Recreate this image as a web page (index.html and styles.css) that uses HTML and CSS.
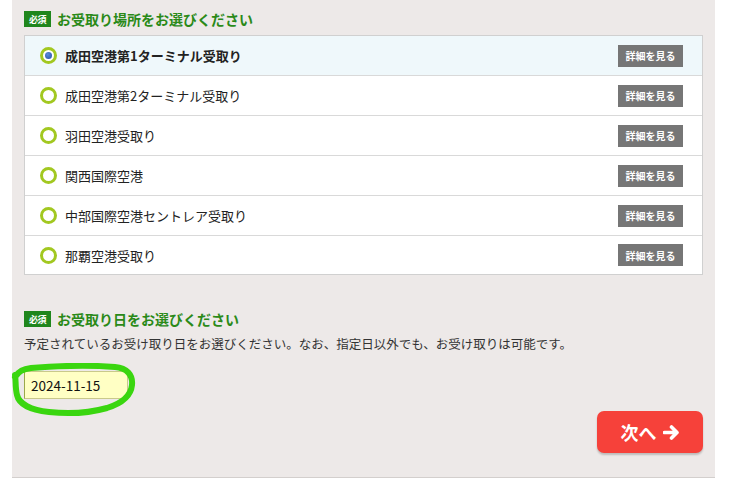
FILE: index.html
```html
<!DOCTYPE html>
<html lang="ja">
<head>
<meta charset="utf-8">
<link rel="stylesheet" href="styles.css">
</head>
<body>
<div class="panel">
  <h2 class="heading"><span class="badge">必須</span>お受取り場所をお選びください</h2>
  <ul class="places">
    <li class="place selected"><span class="radio checked"></span><span class="name">成田空港第1ターミナル受取り</span><span class="detail">詳細を見る</span></li>
    <li class="place"><span class="radio"></span><span class="name">成田空港第2ターミナル受取り</span><span class="detail">詳細を見る</span></li>
    <li class="place"><span class="radio"></span><span class="name">羽田空港受取り</span><span class="detail">詳細を見る</span></li>
    <li class="place"><span class="radio"></span><span class="name">関西国際空港</span><span class="detail">詳細を見る</span></li>
    <li class="place"><span class="radio"></span><span class="name">中部国際空港セントレア受取り</span><span class="detail">詳細を見る</span></li>
    <li class="place"><span class="radio"></span><span class="name">那覇空港受取り</span><span class="detail">詳細を見る</span></li>
  </ul>
  <h2 class="heading second"><span class="badge">必須</span>お受取り日をお選びください</h2>
  <p class="desc">予定されているお受け取り日をお選びください。なお、指定日以外でも、お受け取りは可能です。</p>
  <div class="date-wrap">
    <div class="date">2024-11-15</div>
    <svg class="scribble" width="130" height="60" viewBox="0 0 130 60">
      <path d="M4 14 C8 8 12 6 20 5 C45 3 80 2 104 4 C116 5 122 12 121 22 C120 32 112 40 96 45 C78 50 56 51 38 49 C20 47 8 41 6 32 C4 24 5 16 4 12" fill="none" stroke="#3ad60f" stroke-width="6" stroke-linecap="round" stroke-linejoin="round"/>
    </svg>
  </div>
  <div class="actions">
    <button class="next">次へ<svg class="arrow" width="17" height="15" viewBox="0 0 17 15"><path d="M1.5 7.5 H13.5 M8.5 2 L14 7.5 L8.5 13" fill="none" stroke="#fff" stroke-width="3.6" stroke-linecap="round" stroke-linejoin="round"/></svg></button>
  </div>
</div>
</body>
</html>
```
FILE: styles.css
```css
html, body {
  margin: 0;
  padding: 0;
  background: #ffffff;
}
body {
  font-family: "Noto Sans CJK JP", "Noto Sans", sans-serif;
  color: #222;
}
.panel {
  margin-left: 12px;
  width: 679px;
  height: 468px;
  padding: 9px 12px 0 12px;
  background: #ede9e8;
  border-bottom: 1px solid #d3cfcd;
}
.heading {
  margin: 0;
  height: 20px;
  display: flex;
  align-items: center;
  gap: 6px;
  font-size: 14px;
  font-weight: bold;
  color: #2a8a18;
  line-height: 20px;
}
.badge {
  display: inline-flex;
  align-items: center;
  justify-content: center;
  width: 27px;
  height: 16px;
  background: #1f861d;
  color: #fff;
  font-size: 9px;
  font-weight: bold;
  letter-spacing: -0.5px;
  line-height: 1;
}
.places {
  list-style: none;
  margin: 6px 0 0 0;
  padding: 0;
  background: #fff;
  border: 1px solid #d0d0d0;
}
.place {
  display: flex;
  align-items: center;
  height: 39px;
  padding: 0 19px 0 15px;
  border-top: 1px solid #d9d9d9;
  font-size: 13px;
}
.place:first-child {
  border-top: none;
}
.place:last-child {
  height: 38px;
}
.place.selected {
  background: #eff8fb;
}
.place.selected .name {
  font-weight: bold;
}
.radio {
  box-sizing: border-box;
  width: 17px;
  height: 17px;
  border: 3px solid #a2c820;
  border-radius: 50%;
  background: #fff;
  display: flex;
  align-items: center;
  justify-content: center;
  margin-right: 8px;
}
.radio.checked::after {
  content: "";
  width: 7px;
  height: 7px;
  border-radius: 50%;
  background: radial-gradient(circle at 40% 35%, #5a8ad8, #2550a8);
}
.name {
  flex: 1;
  color: #222;
}
.detail {
  width: 65px;
  height: 22px;
  display: flex;
  align-items: center;
  justify-content: center;
  background: #767676;
  color: #fff;
  font-size: 10px;
  font-weight: bold;
}
.second {
  margin-top: 34px;
}
.desc {
  margin: 6px 0 0 0;
  font-size: 12.5px;
  line-height: 18px;
  color: #333;
}
.date-wrap {
  position: relative;
  margin-top: 18px;
  height: 28px;
}
.date {
  box-sizing: border-box;
  width: 104px;
  height: 28px;
  padding: 0 6px;
  background: #ffffc4;
  border: 1px solid #c9c98a;
  border-left-color: #9aa84a;
  font-family: "Noto Sans CJK JP", sans-serif;
  font-size: 13.5px;
  line-height: 26px;
  color: #111;
}
.scribble {
  position: absolute;
  left: -13px;
  top: -8px;
}
.actions {
  display: flex;
  justify-content: flex-end;
  margin-top: 12px;
}
.next {
  width: 106px;
  height: 42px;
  display: flex;
  align-items: center;
  justify-content: center;
  gap: 6px;
  border: none;
  border-radius: 7px;
  background: #f6413a;
  box-shadow: 0 2px 2px rgba(0,0,0,0.2);
  color: #fff;
  font-family: "Noto Sans CJK JP", sans-serif;
  font-size: 18px;
  font-weight: bold;
  padding: 0;
}
.arrow {
  display: block;
}
```
